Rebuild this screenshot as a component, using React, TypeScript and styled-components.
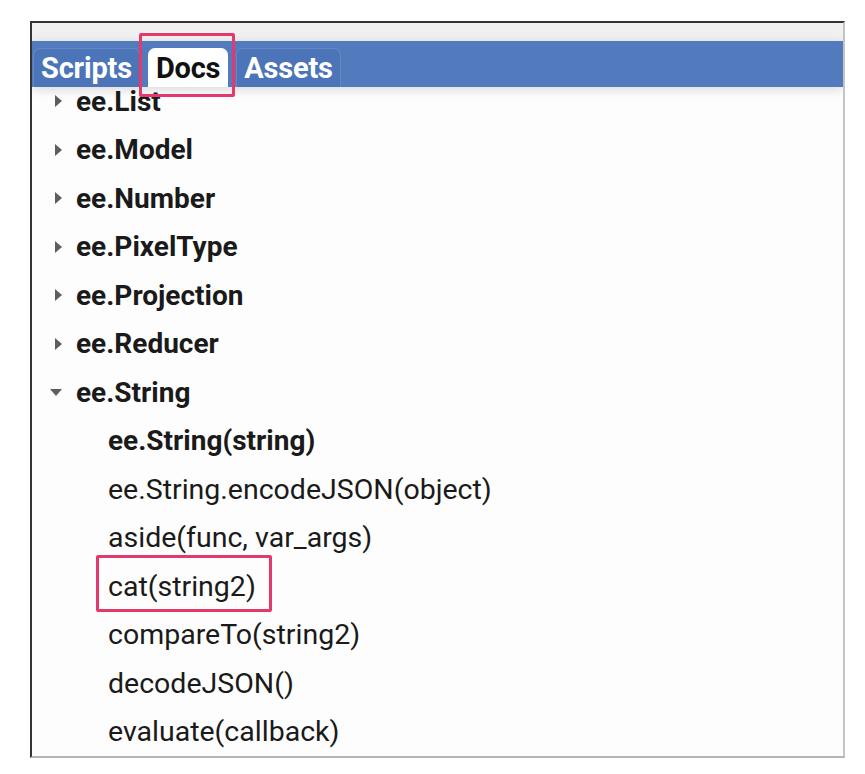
import React from "react";
import styled, { createGlobalStyle } from "styled-components";

const GlobalStyle = createGlobalStyle`
  html, body {
    margin: 0;
    padding: 0;
    background: #ffffff;
  }
  body {
    font-family: Roboto, "Liberation Sans", Arial, sans-serif;
  }
`;

const Page = styled.div`
  padding: 21px 0 0 30px;
`;

const Frame = styled.div`
  width: 811px;
  height: 733px;
  display: flex;
  flex-direction: column;
  background: #fdfdfd;
  border-top: 2px solid #333;
  border-left: 2px solid #333;
  border-right: 2px solid #c4c4c4;
  border-bottom: 2px solid #b4b4b4;
  overflow: hidden;
`;

const TopStrip = styled.div`
  height: 18px;
  background: #f0f0f0;
  flex-shrink: 0;
`;

const TabBar = styled.div`
  height: 46px;
  flex-shrink: 0;
  display: flex;
  align-items: flex-end;
  gap: 8px;
  padding-left: 1px;
  background: #527bbd;
  position: relative;
  z-index: 2;
  box-shadow: 0 3px 10px rgba(0, 0, 0, 0.14);
`;

const Tab = styled.div<{ $active?: boolean }>`
  position: relative;
  height: 39px;
  padding: 0 7px;
  display: flex;
  align-items: center;
  box-sizing: border-box;
  border-radius: 7px 7px 0 0;
  border: 1px solid ${(p) => (p.$active ? "#ffffff" : "rgba(255,255,255,0.14)")};
  border-bottom: none;
  background: ${(p) => (p.$active ? "#ffffff" : "rgba(70,110,180,0.5)")};
  color: ${(p) => (p.$active ? "#111" : "#ffffff")};
  font-size: 29px;
  font-weight: 700;
  letter-spacing: -0.2px;
`;

const Highlight = styled.span<{ $top: number; $left: number; $right: number; $bottom: number }>`
  position: absolute;
  top: ${(p) => p.$top}px;
  left: ${(p) => p.$left}px;
  right: ${(p) => p.$right}px;
  bottom: ${(p) => p.$bottom}px;
  border: 3px solid #e5386c;
  border-radius: 2px;
  pointer-events: none;
`;

const ListViewport = styled.div`
  flex: 1;
  overflow: hidden;
  position: relative;
`;

const List = styled.ul`
  list-style: none;
  margin: -10px 0 0 0;
  padding: 0;
`;

const Row = styled.li<{ $child?: boolean; $bold?: boolean }>`
  height: 48.5px;
  display: flex;
  align-items: center;
  padding-left: ${(p) => (p.$child ? 76 : 22)}px;
  font-size: ${(p) => (p.$bold ? 28 : 28.5)}px;
  font-weight: ${(p) => (p.$bold ? 700 : 400)};
  color: #1a1a1a;
`;

const Caret = styled.span<{ $open?: boolean }>`
  width: 8px;
  height: 10px;
  margin-right: 14px;
  display: flex;
  align-items: center;
  justify-content: center;
  &::before {
    content: "";
    width: 0;
    height: 0;
    ${(p) =>
      p.$open
        ? `border-left: 6px solid transparent;
           border-right: 6px solid transparent;
           border-top: 7px solid #5e5e5e;
           margin-left: -4px;`
        : `border-top: 6px solid transparent;
           border-bottom: 6px solid transparent;
           border-left: 7px solid #5e5e5e;`}
  }
`;

const Label = styled.span`
  position: relative;
`;

const groups = [
  "ee.List",
  "ee.Model",
  "ee.Number",
  "ee.PixelType",
  "ee.Projection",
  "ee.Reducer",
];

const members = [
  { name: "ee.String(string)", bold: true },
  { name: "ee.String.encodeJSON(object)" },
  { name: "aside(func, var_args)" },
  { name: "cat(string2)", marked: true },
  { name: "compareTo(string2)" },
  { name: "decodeJSON()" },
  { name: "evaluate(callback)" },
];

const App: React.FC = () => {
  return (
    <Page>
      <GlobalStyle />
      <Frame>
        <TopStrip />
        <TabBar>
          <Tab>Scripts</Tab>
          <Tab $active>
            Docs
            <Highlight $top={-16} $left={-10} $right={-8} $bottom={-10} />
          </Tab>
          <Tab>Assets</Tab>
        </TabBar>
        <ListViewport>
          <List>
            {groups.map((g) => (
              <Row key={g} $bold>
                <Caret />
                {g}
              </Row>
            ))}
            <Row $bold>
              <Caret $open />
              ee.String
            </Row>
            {members.map((m) => (
              <Row key={m.name} $child $bold={m.bold}>
                <Label>
                  {m.name}
                  {m.marked && (
                    <Highlight $top={-15} $left={-12} $right={-16} $bottom={-9} />
                  )}
                </Label>
              </Row>
            ))}
          </List>
        </ListViewport>
      </Frame>
    </Page>
  );
};

export default App;
